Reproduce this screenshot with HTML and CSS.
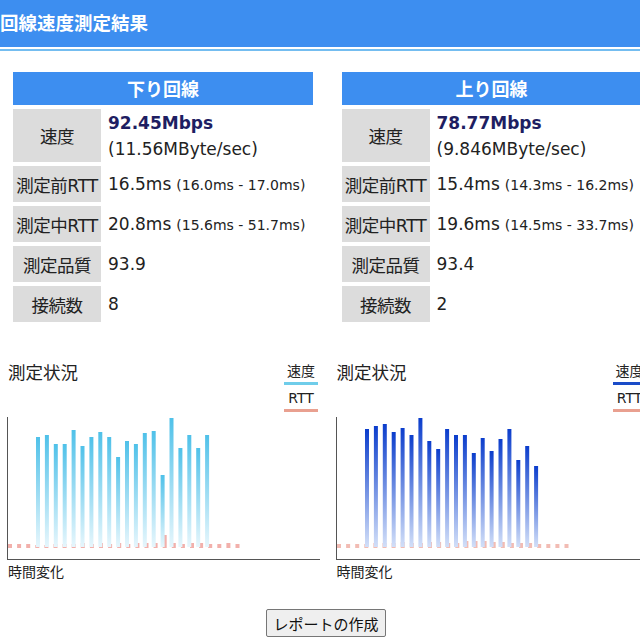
FILE: index.html
```html
<!DOCTYPE html>
<html>
<head>
<meta charset="utf-8">
<title>回線速度測定結果</title>
<link rel="stylesheet" href="styles.css">
</head>
<body>

<div class="title">回線速度測定結果</div>
<div class="rule"></div>

<div class="cols">
  <div class="col">
    <div class="stats">
      <div class="head">下り回線</div>
      <div class="label">速度</div>
      <div class="value two"><b class="speed">92.45Mbps</b><span>(11.56MByte/sec)</span></div>
      <div class="label">測定前RTT</div>
      <div class="value">16.5ms <small>(16.0ms - 17.0ms)</small></div>
      <div class="label">測定中RTT</div>
      <div class="value">20.8ms <small>(15.6ms - 51.7ms)</small></div>
      <div class="label">測定品質</div>
      <div class="value">93.9</div>
      <div class="label">接続数</div>
      <div class="value">8</div>
    </div>

    <div class="chart down">
      <div class="chart-head">
        <div class="chart-title">測定状況</div>
        <div class="legend">
          <div class="key">速度</div>
          <div class="swatch speed-line"></div>
          <div class="key">RTT</div>
          <div class="swatch rtt-line"></div>
        </div>
      </div>
      <svg class="plot" id="plot-down" width="320" height="148"></svg>
      <div class="axis-label">時間変化</div>
    </div>
  </div>

  <div class="col">
    <div class="stats">
      <div class="head">上り回線</div>
      <div class="label">速度</div>
      <div class="value two"><b class="speed">78.77Mbps</b><span>(9.846MByte/sec)</span></div>
      <div class="label">測定前RTT</div>
      <div class="value">15.4ms <small>(14.3ms - 16.2ms)</small></div>
      <div class="label">測定中RTT</div>
      <div class="value">19.6ms <small>(14.5ms - 33.7ms)</small></div>
      <div class="label">測定品質</div>
      <div class="value">93.4</div>
      <div class="label">接続数</div>
      <div class="value">2</div>
    </div>

    <div class="chart up">
      <div class="chart-head">
        <div class="chart-title">測定状況</div>
        <div class="legend">
          <div class="key">速度</div>
          <div class="swatch speed-line"></div>
          <div class="key">RTT</div>
          <div class="swatch rtt-line"></div>
        </div>
      </div>
      <svg class="plot" id="plot-up" width="320" height="148"></svg>
      <div class="axis-label">時間変化</div>
    </div>
  </div>
</div>

<div class="actions">
  <button class="report">レポートの作成</button>
</div>

<script src="script.js"></script>
</body>
</html>
```

FILE: styles.css
```css
html, body {
  margin: 0;
  overflow: hidden;
}

body {
  background: #fff;
  color: #222;
  font-family: "DejaVu Sans", "Noto Sans CJK JP", sans-serif;
  width: 660px;
}

.title {
  height: 47px;
  line-height: 45px;
  background: #3d8ef0;
  color: #fff;
  font-family: "Noto Sans CJK JP", sans-serif;
  font-weight: bold;
  font-size: 18.5px;
  padding-left: 0;
}

.rule {
  margin-top: 2px;
  height: 2px;
  background: #74bdf0;
}

.cols {
  display: flex;
  margin-top: 21px;
}

.col {
  width: 328.5px;
  flex-shrink: 0;
}

/* stats table */
.stats {
  display: grid;
  grid-template-columns: 88px 1fr;
  grid-template-rows: 33px 53px 36px 36px 36px 36px;
  gap: 4px;
  width: 300px;
  margin-left: 13px;
}

.head {
  grid-column: 1 / 3;
  background: #3d8ef0;
  color: #fff;
  font-family: "Noto Sans CJK JP", sans-serif;
  font-weight: bold;
  font-size: 18px;
  text-align: center;
  line-height: 33px;
}

.label {
  background: #dcdcdc;
  font-size: 17.5px;
  display: flex;
  align-items: center;
  justify-content: center;
  white-space: nowrap;
  letter-spacing: -0.5px;
}

.value {
  font-size: 17px;
  padding-left: 3px;
  display: flex;
  align-items: center;
  white-space: nowrap;
}

.value small {
  font-size: 14px;
  margin-left: 5px;
  margin-top: 2px;
}

.value.two {
  flex-direction: column;
  align-items: flex-start;
  justify-content: center;
  line-height: 26px;
}

.speed {
  color: #1e1e62;
  font-weight: bold;
}

/* charts */
.chart {
  margin-top: 39px;
  width: 320px;
}

.chart-head {
  display: flex;
  justify-content: space-between;
  align-items: flex-start;
}

.chart-title {
  font-family: "Noto Sans CJK JP", sans-serif;
  font-size: 17.5px;
  line-height: 22px;
  padding-left: 8px;
}

.legend {
  width: 34px;
  margin-right: 2px;
  text-align: center;
  font-size: 14px;
}

.key {
  line-height: 20px;
}

.key + .swatch + .key {
  margin-top: 3px;
}

.swatch {
  height: 3px;
  margin-top: 1px;
}

.down .speed-line { background: #6fcdea; }
.up .speed-line { background: #1a4cc8; }
.rtt-line { background: #e9a090; }

.plot {
  display: block;
}

.axis-label {
  font-family: "Noto Sans CJK JP", sans-serif;
  font-size: 14px;
  line-height: 20px;
  padding-left: 8px;
  margin-top: 1px;
}

.actions {
  width: 652px;
  text-align: center;
  margin-top: 28px;
}

.report {
  width: 120px;
  height: 28px;
  padding: 0;
  font-family: "Noto Sans CJK JP", sans-serif;
  font-size: 15px;
  color: #111;
  background: #efefef;
  border: 1px solid #767676;
  border-radius: 2px;
}
```

FILE: script.js
```js
var NS = "http://www.w3.org/2000/svg";

function el(name, attrs) {
  var e = document.createElementNS(NS, name);
  for (var k in attrs) e.setAttribute(k, attrs[k]);
  return e;
}

function drawPlot(id, speeds, rtts, top, bottom, rttColor) {
  var svg = document.getElementById(id);
  var defs = el("defs", {});
  var grad = el("linearGradient", { id: id + "-g", x1: 0, y1: 0, x2: 0, y2: 1 });
  grad.appendChild(el("stop", { offset: "0", "stop-color": top }));
  grad.appendChild(el("stop", { offset: "1", "stop-color": bottom }));
  defs.appendChild(grad);
  svg.appendChild(defs);

  // rtt markers
  for (var i = 0; i < rtts.length; i++) {
    var h = rtts[i];
    svg.appendChild(el("rect", { x: 8 + 9.1 * i, y: 136 - h, width: 4, height: h, fill: rttColor }));
  }

  // speed bars
  for (var j = 0; j < speeds.length; j++) {
    var b = speeds[j];
    svg.appendChild(el("rect", { x: 36 + 8.9 * j, y: 135 - b, width: 4, height: b, fill: "url(#" + id + "-g)" }));
  }

  // axes
  svg.appendChild(el("line", { x1: 7.5, y1: 5, x2: 7.5, y2: 147.5, stroke: "#555", "stroke-width": 1 }));
  svg.appendChild(el("line", { x1: 7, y1: 147.5, x2: 320, y2: 147.5, stroke: "#555", "stroke-width": 1 }));
}

drawPlot("plot-down",
  [110, 112, 103, 103, 117, 101, 110, 115, 110, 90, 106, 103, 114, 116, 72, 129, 99, 112, 99, 112],
  [4, 4, 4, 3, 3, 4, 4, 4, 5, 4, 5, 4, 5, 4, 5, 5, 5, 13, 5, 4, 5, 5, 4, 4, 5, 4],
  "#4fc1e9", "#e6f6fc", "#f2b0ab");

drawPlot("plot-up",
  [118, 121, 123, 115, 119, 112, 129, 106, 98, 118, 112, 112, 94, 109, 96, 108, 118, 87, 101, 81],
  [4, 4, 4, 4, 5, 5, 5, 6, 5, 5, 6, 6, 5, 5, 7, 7, 7, 6, 6, 5, 5, 5, 4, 4, 4, 4],
  "#0b3dcc", "#d2dff8", "#f2bcb4");
```
